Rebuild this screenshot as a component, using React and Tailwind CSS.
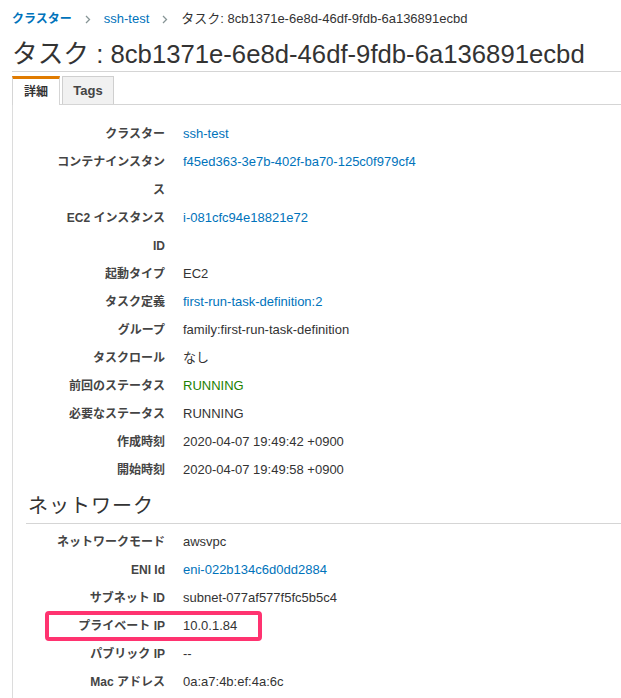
const FONT = { fontFamily: '"Liberation Sans", "Noto Sans CJK JP", sans-serif' }

const DETAILS = [
  { label: 'クラスター', value: 'ssh-test', kind: 'link' },
  { label: 'コンテナインスタンス', value: 'f45ed363-3e7b-402f-ba70-125c0f979cf4', kind: 'link' },
  { label: 'EC2 インスタンス ID', value: 'i-081cfc94e18821e72', kind: 'link' },
  { label: '起動タイプ', value: 'EC2' },
  { label: 'タスク定義', value: 'first-run-task-definition:2', kind: 'link' },
  { label: 'グループ', value: 'family:first-run-task-definition' },
  { label: 'タスクロール', value: 'なし' },
  { label: '前回のステータス', value: 'RUNNING', kind: 'ok' },
  { label: '必要なステータス', value: 'RUNNING' },
  { label: '作成時刻', value: '2020-04-07 19:49:42 +0900' },
  { label: '開始時刻', value: '2020-04-07 19:49:58 +0900' },
]

const NETWORK = [
  { label: 'ネットワークモード', value: 'awsvpc' },
  { label: 'ENI Id', value: 'eni-022b134c6d0dd2884', kind: 'link' },
  { label: 'サブネット ID', value: 'subnet-077af577f5fc5b5c4' },
  { label: 'プライベート IP', value: '10.0.1.84', marked: true },
  { label: 'パブリック IP', value: '--' },
  { label: 'Mac アドレス', value: '0a:a7:4b:ef:4a:6c' },
]

function Chevron() {
  return (
    <svg width="6" height="9" viewBox="0 0 6 9" className="mx-[13px] shrink-0">
      <path d="M1 1l3.5 3.5L1 8" fill="none" stroke="#879596" strokeWidth="1.3" />
    </svg>
  )
}

function Row({ label, value, kind, marked }) {
  let valueClass = 'text-[#333]'
  if (kind === 'link') valueClass = 'text-[#0073bb]'
  else if (kind === 'ok') valueClass = 'text-[#1d8102]'

  return (
    <div className="relative flex leading-[28px]">
      <div className="ml-[42px] w-[110px] shrink-0 text-right text-[12px] font-bold text-[#444]">{label}</div>
      <div className={`ml-[18px] text-[13px] ${valueClass}`}>{value}</div>
      {marked && (
        <div className="absolute left-[32px] top-[-1px] w-[217px] h-[30px] border-4 border-[#ff3370] rounded-[4px]" />
      )}
    </div>
  )
}

export default function App() {
  return (
    <div className="min-h-screen bg-white pl-[12px] pt-[10px] overflow-hidden" style={FONT}>
      <div className="flex items-center h-[18px] text-[13px] whitespace-nowrap">
        <span className="text-[12px] font-bold text-[#0073bb]">クラスター</span>
        <Chevron />
        <span className="text-[#0073bb]">ssh-test</span>
        <Chevron />
        <span className="text-[#333]">タスク: 8cb1371e-6e8d-46df-9fdb-6a136891ecbd</span>
      </div>

      <h1 className="mt-[9px] pt-px text-[25.7px] leading-[33px] text-[#333] whitespace-nowrap border-b border-[#d5d5d5]">
        タスク : 8cb1371e-6e8d-46df-9fdb-6a136891ecbd
      </h1>

      <div className="mt-[5px] flex items-end gap-[2px] border-b border-[#d5d5d5] h-[28px]">
        <div className="h-[29px] -mb-px w-[48px] bg-white border-t-[3px] border-t-[#e07b00] border-x border-x-[#d5d5d5] flex items-center justify-center text-[12px] font-bold text-[#333]">
          詳細
        </div>
        <div className="h-[28px] w-[52px] bg-[#f1f1f1] border border-[#cfcfcf] border-b-0 flex items-center justify-center text-[13px] font-bold text-[#444]">
          Tags
        </div>
      </div>

      <div className="border-l border-[#dcdcdc] pt-[15px] pb-[10px]">
        {DETAILS.map(r => <Row key={r.label} {...r} />)}

        <div className="ml-[13px] mt-[8px] border-b border-[#d5d5d5] pb-[3px]">
          <h2 className="pl-[2px] text-[20px] leading-[28px] font-normal text-[#333] tracking-[1px]">ネットワーク</h2>
        </div>

        <div className="mt-[4px]">
          {NETWORK.map(r => <Row key={r.label} {...r} />)}
        </div>
      </div>
    </div>
  )
}
